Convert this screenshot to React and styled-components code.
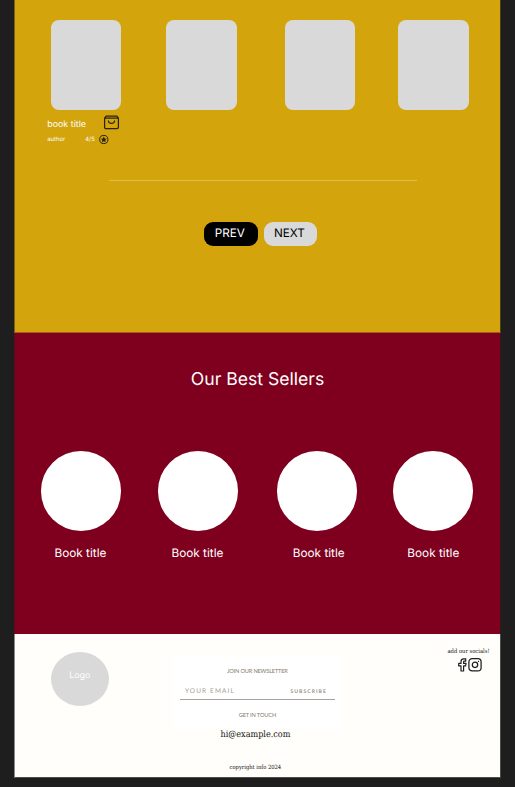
import React from "react";
import styled, { createGlobalStyle } from "styled-components";

const GlobalStyle = createGlobalStyle`
  * { box-sizing: border-box; }
  body { margin: 0; background: #1e1e1e; overflow: hidden; }
  h2, p { margin: 0; font-weight: 400; }
`;

const Page = styled.div`
  width: 487px;
  height: 787px;
  margin-left: 14px;
  font-family: Inter, sans-serif;
  color: #fff;
  text-rendering: geometricPrecision;
  -webkit-font-smoothing: antialiased;
`;

const Section = styled.section`
  height: ${(p) => p.$height}px;
  background: ${(p) => p.$bg};
  border-left: 1px solid ${(p) => p.$left};
  border-right: 1px solid ${(p) => p.$right};
`;

const Catalog = styled(Section)`
  padding-top: 20px;
  border-bottom: 1px solid #a65a15;
`;

const Covers = styled.div`
  display: flex;
  height: 90px;
`;

const Cover = styled.div`
  width: 70.5px;
  height: 89.7px;
  flex: none;
  margin-left: ${(p) => p.$gap}px;
  border-radius: 8px;
  background: #d9d9d9;
`;

const BookInfo = styled.div`
  width: 80px;
  margin-left: 32.3px;
`;

const InfoRow = styled.div`
  display: flex;
  align-items: center;
  height: ${(p) => p.$height}px;
  white-space: nowrap;
`;

const BookTitle = styled.p`
  width: 56.7px;
  font-size: 8.9px;
  line-height: 12px;
  margin-top: 5px;
`;

const Author = styled.p`
  width: 38px;
  margin-top: 2px;
  font-size: 5.85px;
  line-height: 8px;
`;

const Rating = styled.p`
  width: 14px;
  margin-top: 2px;
  font-size: 5.85px;
  line-height: 8px;
`;

const Icon = styled.svg`
  display: block;
  flex: none;
  overflow: visible;
`;

const Divider = styled.hr`
  width: 308px;
  height: 1px;
  margin: 36px 0 0 94px;
  border: 0;
  background: #dfbc4b;
`;

const Pager = styled.div`
  display: flex;
  gap: 6.2px;
  margin: 41px 0 0 189px;
`;

const PageButton = styled.button`
  width: 53.5px;
  height: 24.4px;
  padding: 0 2px 3px 0;
  border: 0;
  border-radius: 9px;
  background: ${(p) => (p.$active ? "#000" : "#d9d9d9")};
  color: ${(p) => (p.$active ? "#fff" : "#000")};
  font: 400 11.7px/20px Inter, sans-serif;
  text-rendering: geometricPrecision;
`;

const SellersTitle = styled.h2`
  padding-top: 35px;
  font-size: 17.6px;
  line-height: 24px;
  text-align: center;
`;

const Sellers = styled.div`
  display: flex;
  margin-top: 59px;
`;

const Seller = styled.div`
  width: 80px;
  flex: none;
  margin-left: ${(p) => p.$gap}px;
`;

const Circle = styled.div`
  height: 79.6px;
  border-radius: 50%;
  background: #fff;
`;

const SellerName = styled.p`
  margin-top: 14.4px;
  padding-left: ${(p) => p.$shift}px;
  padding-right: 1.2px;
  font-size: 11.8px;
  line-height: 16px;
  text-align: center;
  white-space: nowrap;
`;

const Footer = styled(Section)`
  display: flex;
  align-items: flex-start;
  border-bottom: 1px solid #4c4c4b;
  color: #111;
`;

const Logo = styled.div`
  display: flex;
  justify-content: center;
  width: 58.3px;
  height: 54.3px;
  flex: none;
  margin: 17.5px 0 0 35.6px;
  padding-top: 18.6px;
  border-radius: 50%;
  background: #d9d9d9;
  color: #fff;
  font-size: 8.8px;
  line-height: 12px;
`;

const Contact = styled.div`
  width: 168px;
  flex: none;
  margin: 23px 0 0 65px;
  text-align: center;
`;

const Newsletter = styled.div`
  height: 71px;
  padding: 11px 7px 0 6px;
  background: #fff;
`;

const Caption = styled.p`
  font: 400 5.65px/8px Lato, sans-serif;
  letter-spacing: ${(p) => p.$spacing}px;
  color: #857a6f;
  white-space: nowrap;
`;

const SignUp = styled.div`
  display: flex;
  justify-content: space-between;
  align-items: center;
  height: 24px;
  margin-bottom: 12px;
  padding: 8px 7px 0 5px;
  border-bottom: 1px solid #aaa19a;
`;

const Field = styled.span`
  font: 400 6.5px/10px Lato, sans-serif;
  letter-spacing: 1.12px;
  color: #a69e96;
`;

const Subscribe = styled.span`
  margin-right: 1px;
  font: 700 5.1px/10px Lato, sans-serif;
  letter-spacing: 1.03px;
  color: #9a9087;
`;

const Email = styled.p`
  padding: 1px 5px 0 0;
  font: 400 9px/12px "DejaVu Serif Condensed", "DejaVu Serif", serif;
  font-stretch: condensed;
  letter-spacing: -0.01px;
`;

const Copyright = styled.p`
  margin-top: 22px;
  padding-right: 5px;
  font: 400 5.8px/10px "DejaVu Serif Condensed", "DejaVu Serif", serif;
  font-stretch: condensed;
  letter-spacing: -0.02px;
`;

const Socials = styled.div`
  width: 44px;
  flex: none;
  margin: 13px 0 0 104.6px;
  white-space: nowrap;
`;

const SocialLabel = styled.p`
  display: flex;
  justify-content: center;
  font: 400 5.8px/10px "DejaVu Serif Condensed", "DejaVu Serif", serif;
  font-stretch: condensed;
  letter-spacing: 0;
`;

const SocialIcons = styled.div`
  display: flex;
  gap: 1.3px;
  margin: 1px 0 0 10.5px;
`;

const sellers = [
  { gap: 26, shift: 0 },
  { gap: 37, shift: 0 },
  { gap: 38.8, shift: 5 },
  { gap: 36.6, shift: 1 },
];
const coverGaps = [35.6, 45, 48, 43.2];

export default function App() {
  return (
    <>
      <GlobalStyle />
      <Page>
        <Catalog $height={333} $bg="#d3a40c" $left="#78621a" $right="#49401a">
          <Covers>
            {coverGaps.map((gap, i) => <Cover key={i} $gap={gap} />)}
          </Covers>
          <BookInfo>
            <InfoRow $height={24}>
              <BookTitle>book title</BookTitle>
              <Icon width="15" height="14" viewBox="0 0 15 14" fill="none" stroke="#292313" strokeWidth="1.25" strokeLinejoin="round" strokeLinecap="round">
                <path d="M.6 3.2 2.1 1.2h10.8l1.5 2v9q0 1.4-1.5 1.4H2.1Q.6 13.6.6 12.2zM.6 3.2h13.8M4.4 6c.5 3.2 5.6 3.2 6.2 0" />
              </Icon>
            </InfoRow>
            <InfoRow $height={10}>
              <Author>author</Author>
              <Rating>4/5</Rating>
              <Icon width="9" height="9" viewBox="0 0 9 9">
                <circle cx="4.8" cy="4.5" r="4.1" fill="none" stroke="#292313" />
                <path fill="#292313" d="m4.8 1.5.9 1.9 2.1.3-1.5 1.4.4 2.2-1.9-1.1-1.9 1.1.4-2.2-1.5-1.4 2.1-.3z" />
              </Icon>
            </InfoRow>
          </BookInfo>
          <Divider />
          <Pager>
            <PageButton $active>PREV</PageButton>
            <PageButton>NEXT</PageButton>
          </Pager>
        </Catalog>

        <Section $height={301} $bg="#7e001e" $left="#5c0a1e" $right="#36151e">
          <SellersTitle>Our Best Sellers</SellersTitle>
          <Sellers>
            {sellers.map(({ gap, shift }, i) => (
              <Seller key={i} $gap={gap}>
                <Circle />
                <SellerName $shift={shift}>Book title</SellerName>
              </Seller>
            ))}
          </Sellers>
        </Section>

        <Footer as="footer" $height={144} $bg="#fffefa" $left="#8b8b89" $right="#4c4c4b">
          <Logo>Logo</Logo>
          <Contact>
            <Newsletter>
              <Caption $spacing={-0.17}>JOIN OUR NEWSLETTER</Caption>
              <SignUp>
                <Field>YOUR EMAIL</Field>
                <Subscribe>SUBSCRIBE</Subscribe>
              </SignUp>
              <Caption $spacing={-0.13}>GET IN TOUCH</Caption>
            </Newsletter>
            <Email>hi@example.com</Email>
            <Copyright>copyright info 2024</Copyright>
          </Contact>
          <Socials>
            <SocialLabel>add our socials!</SocialLabel>
            <SocialIcons>
              <Icon width="10" height="14" viewBox="0 0 10 14" fill="none" stroke="#1e1e1e" strokeWidth="1.2" strokeLinejoin="round">
                <path d="M8.7.8H6.9Q4 .8 4 3.7v1.7H1.7v2.5H4V13h2.6V7.9h2L9 5.4H6.6V3.8q0-.6.7-.6h1.4z" />
              </Icon>
              <Icon width="14" height="14" viewBox="0 0 14 14" fill="none" stroke="#1e1e1e" strokeWidth="1.25">
                <rect x=".9" y=".7" width="12.2" height="12.2" rx="3.2" />
                <circle cx="7" cy="6.8" r="2.7" />
                <circle cx="10.5" cy="3.4" r=".7" fill="#1e1e1e" stroke="none" />
              </Icon>
            </SocialIcons>
          </Socials>
        </Footer>
      </Page>
    </>
  );
}
